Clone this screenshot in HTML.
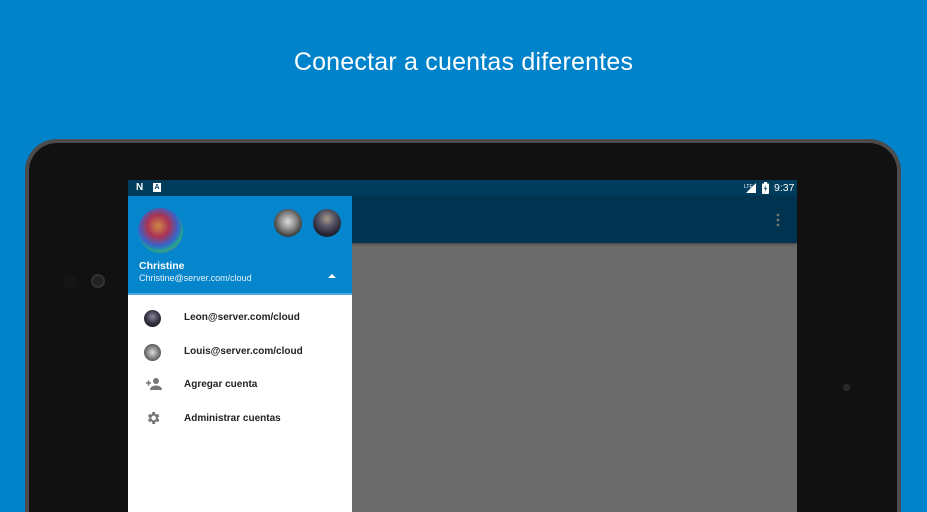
<!DOCTYPE html>
<html><head><meta charset="utf-8"><style>
*{margin:0;padding:0;box-sizing:border-box}
html,body{width:927px;height:512px;overflow:hidden}
body{background:#0083cb;font-family:"Liberation Sans",sans-serif;position:relative}
.title{position:absolute;top:48px;left:0;width:927px;text-align:center;color:#fff;font-size:25px;font-weight:300;letter-spacing:.2px}
.tab{position:absolute;left:25px;top:139px;width:876px;height:373px;border-radius:32px 32px 0 0;background:#4c4c4c;padding:4px 4px 0 4px}
.tab .in{width:100%;height:100%;border-radius:28px 28px 0 0;background:#111}
.cam{position:absolute;left:91px;top:274px;width:14px;height:14px;border-radius:50%;background:#222;border:2px solid #333}
.cam2{position:absolute;left:62px;top:274px;width:14px;height:14px;border-radius:50%;background:#151515}
.dot{position:absolute;left:843px;top:384px;width:7px;height:7px;border-radius:50%;background:#2a2a2a}
.scr{position:absolute;left:128px;top:180px;width:669px;height:332px;background:#6b6b6b;overflow:hidden}
.sb{position:absolute;left:0;top:0;width:669px;height:16px;background:#003c5c;color:#fff;font-size:10px}
.tb{position:absolute;left:0;top:16px;width:669px;height:47px;background:#00334f;box-shadow:0 1px 3px rgba(0,0,0,.4)}
.dr{position:absolute;left:0;top:16px;width:224px;height:316px;background:#fff}
.hd{position:absolute;left:0;top:0;width:224px;height:99px;background:#0586cc;border-bottom:2px solid #4aa9de}
.av{position:absolute;border-radius:50%}
.it{position:absolute;left:0;width:224px;height:20px;font-size:10px;color:#222;font-weight:bold}
.it span{position:absolute;left:56px;top:5px}
</style></head><body>
<div class="title">Conectar a cuentas diferentes</div>
<div class="tab"><div class="in"></div></div>
<div class="cam2"></div><div class="cam"></div><div class="dot"></div>
<div class="scr">
 <div class="sb">
  <span style="position:absolute;left:8px;top:2px;font-weight:bold;font-size:10px">N</span>
  <span style="position:absolute;left:25px;top:3px;width:8px;height:9px;background:#fff;color:#003c5c;font-size:7px;text-align:center;line-height:9px;font-weight:bold">A</span>
  <svg style="position:absolute;left:616px;top:3px" width="12" height="10"><polygon points="12,0 12,10 2,10" fill="#fff"/><text x="0" y="5" font-size="5" fill="#fff" font-family="Liberation Sans">LTE</text></svg>
  <svg style="position:absolute;left:634px;top:2px" width="7" height="12"><rect x="2" y="0" width="3" height="2" fill="#fff"/><rect x="0" y="1.5" width="7" height="10.5" rx="1" fill="#fff"/><path d="M4 3 L2 7 H3.5 L3 10 L5 6 H3.5z" fill="#003c5c"/></svg>
  <span style="position:absolute;left:646px;top:2px;font-size:10.5px">9:37</span>
 </div>
 <div class="tb"><svg style="position:absolute;left:648px;top:17px" width="4" height="14"><circle cx="2" cy="2" r="1.4" fill="#777"/><circle cx="2" cy="7" r="1.4" fill="#777"/><circle cx="2" cy="12" r="1.4" fill="#777"/></svg></div>
 <div class="dr">
  <div class="hd">
   <div class="av" style="left:10px;top:12px;width:45px;height:45px;background:radial-gradient(circle at 45% 40%,#c84,#a35 30%,#36c 55%,#2a8 70%,#c2a 85%,#431)"></div>
   <div class="av" style="left:146px;top:13px;width:28px;height:28px;background:radial-gradient(circle at 50% 45%,#ddd,#888 40%,#333 75%,#111)"></div>
   <div class="av" style="left:185px;top:13px;width:28px;height:28px;background:radial-gradient(circle at 50% 35%,#a98,#556 35%,#223 70%,#111)"></div>
   <div style="position:absolute;left:11px;top:64px;color:#fff;font-size:10.5px;font-weight:bold">Christine</div>
   <div style="position:absolute;left:11px;top:77px;color:#e6f2fa;font-size:9px">Christine@server.com/cloud</div>
   <svg style="position:absolute;left:200px;top:77px" width="8" height="5"><polygon points="0,5 4,1 8,5" fill="#fff"/></svg>
  </div>
  <div class="it" style="top:111px"><div class="av" style="left:16px;top:3px;width:17px;height:17px;background:radial-gradient(circle at 50% 40%,#889,#334 50%,#111)"></div><span>Leon@server.com/cloud</span></div>
  <div class="it" style="top:145px"><div class="av" style="left:16px;top:3px;width:17px;height:17px;background:radial-gradient(circle,#ddd,#888 45%,#222)"></div><span>Louis@server.com/cloud</span></div>
  <div class="it" style="top:178px"><svg style="position:absolute;left:16px;top:3px" width="18" height="14"><path d="M2 6h5M4.5 3.5v5" stroke="#777" stroke-width="1.6"/><circle cx="12" cy="4" r="3" fill="#777"/><path d="M6 13c0-3 3-4.5 6-4.5s6 1.5 6 4.5z" fill="#777"/></svg><span>Agregar cuenta</span></div>
  <div class="it" style="top:212px"><svg style="position:absolute;left:17px;top:2px" width="16" height="16" viewBox="0 0 24 24"><path fill="#777" d="M19.4 13a7.5 7.5 0 000-2l2.1-1.6-2-3.5-2.5 1a7 7 0 00-1.7-1L15 3h-4l-.4 2.9a7 7 0 00-1.7 1l-2.5-1-2 3.5L6.6 11a7.5 7.5 0 000 2l-2.1 1.6 2 3.5 2.5-1a7 7 0 001.7 1L11 21h4l.4-2.9a7 7 0 001.7-1l2.5 1 2-3.5zM13 15.5a3.5 3.5 0 110-7 3.5 3.5 0 010 7z"/></svg><span>Administrar cuentas</span></div>
 </div>
</div>
</body></html>
